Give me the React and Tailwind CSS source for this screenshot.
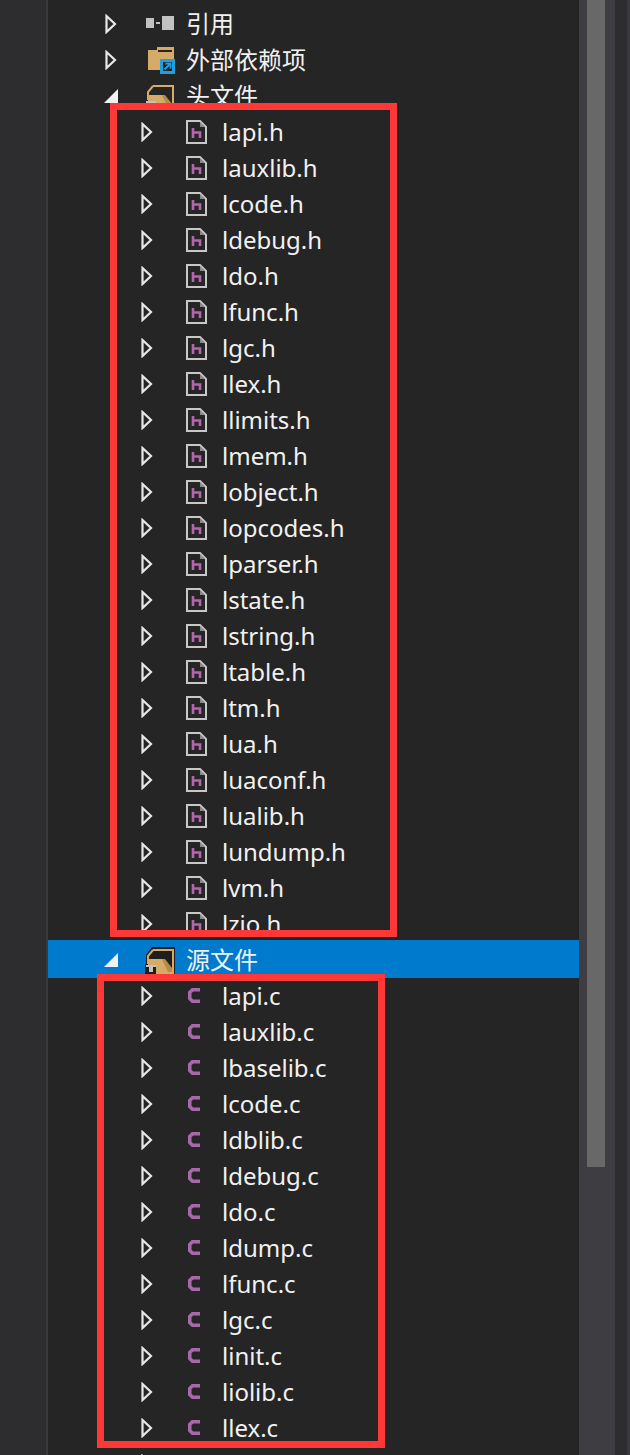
import React from "react";

const headers = ["lapi.h", "lauxlib.h", "lcode.h", "ldebug.h", "ldo.h", "lfunc.h", "lgc.h", "llex.h", "llimits.h", "lmem.h", "lobject.h", "lopcodes.h", "lparser.h", "lstate.h", "lstring.h", "ltable.h", "ltm.h", "lua.h", "luaconf.h", "lualib.h", "lundump.h", "lvm.h", "lzio.h"];
const sources = ["lapi.c", "lauxlib.c", "lbaselib.c", "lcode.c", "ldblib.c", "ldebug.c", "ldo.c", "ldump.c", "lfunc.c", "lgc.c", "linit.c", "liolib.c", "llex.c", "lmathlib.c"];

function Collapsed() {
  return (
    <svg width="12" height="20" viewBox="0 0 12 20">
      <path d="M1.5 2 L10 10 L1.5 18 Z" fill="none" stroke="#e8e8e8" strokeWidth="2.2" />
    </svg>
  );
}

function Expanded() {
  return (
    <svg width="14" height="14" viewBox="0 0 14 14">
      <path d="M14 0 V14 H0 Z" fill="#f1f1f1" />
    </svg>
  );
}

function RefIcon() {
  return (
    <svg width="32" height="32" viewBox="0 0 32 32">
      <rect x="2" y="10" width="8" height="10" fill="#c2c2c2" />
      <rect x="12" y="14" width="4" height="2" fill="#c2c2c2" />
      <rect x="18" y="8" width="12" height="14" fill="#c2c2c2" />
    </svg>
  );
}

function ExternalIcon() {
  return (
    <svg width="32" height="32" viewBox="0 0 32 32">
      <path d="M4 6 H13 V3 H30 V15 H16 V26 H4 Z" fill="#d6aa68" />
      <rect x="14" y="6" width="14" height="2" fill="#252526" />
      <rect x="16" y="15" width="15" height="15" fill="#1f9fe0" />
      <rect x="19" y="18" width="9" height="9" fill="#252526" />
      <path d="M20.5 25.5 L26 20 M21.5 19.5 H26.5 V24.5" fill="none" stroke="#1f9fe0" strokeWidth="1.8" />
    </svg>
  );
}

function FilterFolder({ selected }) {
  return (
    <svg width="32" height="32" viewBox="0 0 32 32">
      {selected && <path d="M8 3 H31 V31 H1 V20 H2 V11 Z" fill="#1e1e1e" />}
      <path d="M9 6 H29 V29 H12 M9 6 L4 12 V20" fill="none" stroke="#d6aa68" strokeWidth="2" />
      <path d="M4 15 H20 L28 28 H12 V22 H4 Z" fill="#d6aa68" />
      <path d="M18 15 H21 L28 24 V28 H24 Z" fill="#b88a4a" />
      <rect x="2" y="21" width="10" height="2" fill="#c2c2c2" />
      <rect x="5" y="23" width="4" height="5" fill="#c2c2c2" />
    </svg>
  );
}

function HeaderIcon() {
  return (
    <svg width="21" height="24" viewBox="0 0 21 24">
      <path d="M1 1 H14 L20 7 V23 H1 Z" fill="none" stroke="#c8c8c8" strokeWidth="2" />
      <path d="M14 2 V7 H19 Z" fill="#8a8a8a" />
      <path d="M7 8 V18 M7 12.5 H14 V18" fill="none" stroke="#b565ae" strokeWidth="2.6" />
    </svg>
  );
}

function SourceIcon() {
  return (
    <svg width="20" height="18" viewBox="0 0 20 18">
      <path d="M14 2.75 H6.5 L3.75 5.5 V11.5 L6.5 14.25 H14" fill="none" stroke="#a868ab" strokeWidth="3.5" />
    </svg>
  );
}

function Row({ level = 0, toggle, icon, label, selected }) {
  return (
    <div className={`flex shrink-0 items-center ${selected ? "-mt-[2px] h-[38px] bg-[#007acc] pt-[2px]" : "h-9"}`}>
      <div className={`flex items-center justify-center ${level === 1 ? "ml-[93px] w-3" : "ml-[56px] w-[14px]"}`}>
        {toggle}
      </div>
      <div className={`flex items-center ${level === 1 ? "ml-[33px] w-[21px]" : "ml-[26px] w-8"}`}>
        {icon}
      </div>
      <span className={`whitespace-nowrap text-[24px] leading-9 text-[#f1f1f1] ${level === 1 ? "ml-[15px]" : "ml-[10px]"}`}>
        {label}
      </span>
    </div>
  );
}

export default function App() {
  return (
    <div
      className="relative flex h-[1455px] w-[630px] overflow-hidden bg-[#2d2d30]"
      style={{ fontFamily: '"Noto Sans", "Noto Sans CJK SC", sans-serif' }}
    >
      <div className="w-[48px] shrink-0 border-r-2 border-[#3a3a3e]" />

      {/* solution explorer tree */}
      <div className="flex h-full w-[531px] shrink-0 flex-col overflow-hidden bg-[#252526] pt-[6px]">
        <Row toggle={<Collapsed />} icon={<RefIcon />} label="引用" />
        <Row toggle={<Collapsed />} icon={<ExternalIcon />} label="外部依赖项" />
        <Row toggle={<Expanded />} icon={<FilterFolder />} label="头文件" />
        {headers.map((name) => (
          <Row key={name} level={1} toggle={<Collapsed />} icon={<HeaderIcon />} label={name} />
        ))}
        <Row selected toggle={<Expanded />} icon={<FilterFolder selected />} label="源文件" />
        {sources.map((name) => (
          <Row key={name} level={1} toggle={<Collapsed />} icon={<SourceIcon />} label={name} />
        ))}
      </div>

      {/* scrollbar */}
      <div className="w-[36px] shrink-0 bg-[#3e3e42] px-2">
        <div className="h-[1167px] w-[18px] bg-[#686868]" />
      </div>
      <div className="flex-1 border-r-[3px] border-[#3a3a3e] bg-[#2d2d30]" />

      {/* red annotation boxes */}
      <div className="absolute left-[110px] top-[103px] h-[834px] w-[287px] border-[7px] border-[#fe3737]" />
      <div className="absolute left-[97px] top-[974px] h-[474px] w-[288px] border-[7px] border-[#fe3737]" />
    </div>
  );
}
